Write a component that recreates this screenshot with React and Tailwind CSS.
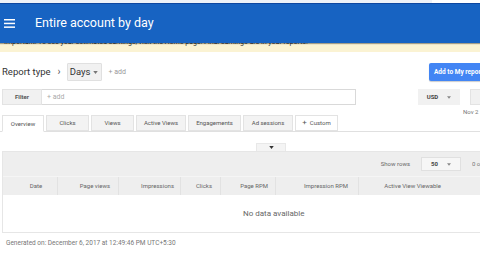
import React from "react";

const tabs = ["Overview", "Clicks", "Views", "Active Views", "Engagements", "Ad sessions"];
const tabWidths = ["w-[42px]", "w-[43px]", "w-[43px]", "w-[50px]", "w-[53px]", "w-[50px]"];

const columns = [
  { label: "Date", w: "w-[55px]", align: "justify-center pl-[12px]" },
  { label: "Page views", w: "w-[61px]", align: "justify-end pr-[8px]" },
  { label: "Impressions", w: "w-[62px]", align: "justify-end pr-[6px]" },
  { label: "Clicks", w: "w-[40px]", align: "justify-end pr-[8px]" },
  { label: "Page RPM", w: "w-[55px]", align: "justify-end pr-[7px]" },
  { label: "Impression RPM", w: "w-[83px]", align: "justify-end pr-[10px]" },
  { label: "Active View Viewable", w: "w-[110px]", align: "justify-end pr-[28px]" },
];

const Caret = ({ size = "w-[6px] h-[4px]", color = "fill-[#777]" }) => (
  <svg viewBox="0 0 6 4" className={`${size} ${color}`}>
    <path d="M0 0h6L3 4z" />
  </svg>
);

const App = () => {
  return (
    <div
      className="w-[480px] h-[270px] overflow-hidden bg-white text-[#444] leading-none"
      style={{ fontFamily: "Roboto, 'Liberation Sans', sans-serif" }}
    >
      {/* top strip */}
      <div className="h-[4px] bg-[#eef2f8] border-b border-[#0d47a1] flex">
        <div className="w-[432px]" />
        <div className="flex-1 bg-white" />
      </div>

      {/* header */}
      <div className="relative z-10 h-[39px] bg-[#1763c2] flex items-center shadow-[0_1px_1px_rgba(0,0,0,0.35)]">
        <div className="w-[35px] flex items-center pl-[4px]">
          <svg width="11" height="9" viewBox="0 0 11 9" className="fill-white">
            <rect y="0" width="11" height="1.5" />
            <rect y="3.7" width="11" height="1.5" />
            <rect y="7.4" width="11" height="1.5" />
          </svg>
        </div>
        <span className="text-white text-[12.5px] leading-none">Entire account by day</span>
      </div>

      {/* notification banner, partly hidden under the header */}
      <div className="h-[9px] bg-[#fbf3d3] overflow-hidden">
        <div className="-mt-[5px] pl-[4px] text-[7px] leading-[8px] text-[#333] whitespace-nowrap">
          Important: To see your estimated earnings, visit the Home page. Final earnings are in your reports.
        </div>
      </div>

      {/* report type row */}
      <div className="flex items-center h-[28px] mt-[6px]">
        <span className="pl-[2px] text-[9.5px] text-[#333]">Report type</span>
        <span className="ml-[7px] text-[10px] text-[#555]">›</span>
        <div className="ml-[6px] h-[18px] w-[35px] bg-[#f1f1f1] border border-[#e0e0e0] rounded-[1px] flex items-center justify-center gap-[3px]">
          <span className="text-[9.5px] text-[#333]">Days</span>
          <Caret size="w-[5px] h-[3px]" />
        </div>
        <span className="ml-[7px] text-[7px] text-[#999]">+ add</span>
        <div className="flex-1" />
        <div className="h-[18px] w-[58px] -mr-[7px] bg-[#4285f4] rounded-[2px] flex items-center pl-[5px] whitespace-nowrap overflow-hidden shadow-[0_1px_1px_rgba(0,0,0,0.2)]">
          <span className="text-white text-[6.5px] font-bold">Add to My report</span>
        </div>
      </div>

      {/* filter row */}
      <div className="flex items-center h-[18px] mt-[2px]">
        <div className="ml-[2px] h-[16px] w-[40px] bg-[#f1f1f1] border border-[#e3e3e3] flex items-center justify-center">
          <span className="text-[6px] font-bold text-[#555]">Filter</span>
        </div>
        <div className="h-[16px] w-[314px] border border-[#d9d9d9] border-l-0 flex items-center pl-[5px]">
          <span className="text-[7px] text-[#aaa]">+ add</span>
        </div>
        <div className="flex-1" />
        <div className="h-[16px] w-[42px] bg-[#f1f1f1] flex items-center justify-center gap-[9px]">
          <span className="text-[6px] font-bold text-[#444]">USD</span>
          <Caret size="w-[4px] h-[3px]" color="fill-[#888]" />
        </div>
        <div className="ml-[10px] h-[16px] w-[10px] bg-[#f1f1f1] border border-[#e3e3e3] border-r-0" />
      </div>

      {/* date label */}
      <div className="flex justify-end h-[11px] -mb-[3px] items-center">
        <span className="text-[6px] text-[#777] whitespace-nowrap w-[17px] overflow-hidden">Nov 2</span>
      </div>

      {/* tabs */}
      <div className="flex items-end h-[18px] border-b border-[#e0e0e0] pl-[2px] gap-[2px]">
        {tabs.map((t, i) => (
          <div
            key={t}
            className={`${tabWidths[i]} flex items-center justify-center border border-[#e3e3e3] ${
              i === 0 ? "bg-white border-b-white -mb-[1px] h-[17px]" : "bg-[#f3f3f3] h-[16px]"
            }`}
          >
            <span className="text-[6px] text-[#555] whitespace-nowrap">{t}</span>
          </div>
        ))}
        <div className="w-[43px] h-[16px] flex items-center justify-center gap-[3px] border border-[#e3e3e3] bg-white">
          <span className="text-[8px] text-[#555] leading-none">+</span>
          <span className="text-[6px] text-[#555]">Custom</span>
        </div>
      </div>

      {/* collapse handle */}
      <div className="h-[19px] flex items-end pl-[256px]">
        <div className="w-[30px] h-[8px] bg-[#f4f4f4] border border-[#e8e8e8] border-b-0 flex items-center justify-center">
          <Caret size="w-[5px] h-[3px]" color="fill-[#333]" />
        </div>
      </div>

      {/* table */}
      <div className="ml-[2px] border border-[#e6e6e6] border-r-0">
        <div className="bg-[#eeeeee] h-[24px] flex items-center">
          <div className="flex-1" />
          <span className="text-[6px] text-[#666]">Show rows</span>
          <div className="ml-[11px] h-[14px] w-[40px] bg-[#f6f6f6] border border-[#e0e0e0] flex items-center justify-center gap-[9px]">
            <span className="text-[6px] font-bold text-[#444]">50</span>
            <Caret size="w-[4px] h-[3px]" color="fill-[#888]" />
          </div>
          <span className="ml-[11px] text-[6px] text-[#777] whitespace-nowrap w-[8px] overflow-hidden">0 of</span>
        </div>
        <div className="bg-[#eeeeee] h-[19px] flex border-t border-[#f5f5f5]">
          {columns.map((c, i) => (
            <div
              key={c.label}
              className={`${c.w} h-full flex items-center ${c.align} ${i < columns.length - 1 ? "border-r border-[#e2e2e2]" : ""}`}
            >
              <span className="text-[6px] text-[#666] whitespace-nowrap">{c.label}</span>
            </div>
          ))}
        </div>
        <div className="h-[37px] bg-white flex items-center pl-[240px]">
          <span className="text-[8px] text-[#666] whitespace-nowrap">No data available</span>
        </div>
      </div>

      <div className="pl-[6px] mt-[7px] text-[6.5px] text-[#777]">
        Generated on: December 6, 2017 at 12:49:46 PM UTC+5:30
      </div>
    </div>
  );
};

export default App;
